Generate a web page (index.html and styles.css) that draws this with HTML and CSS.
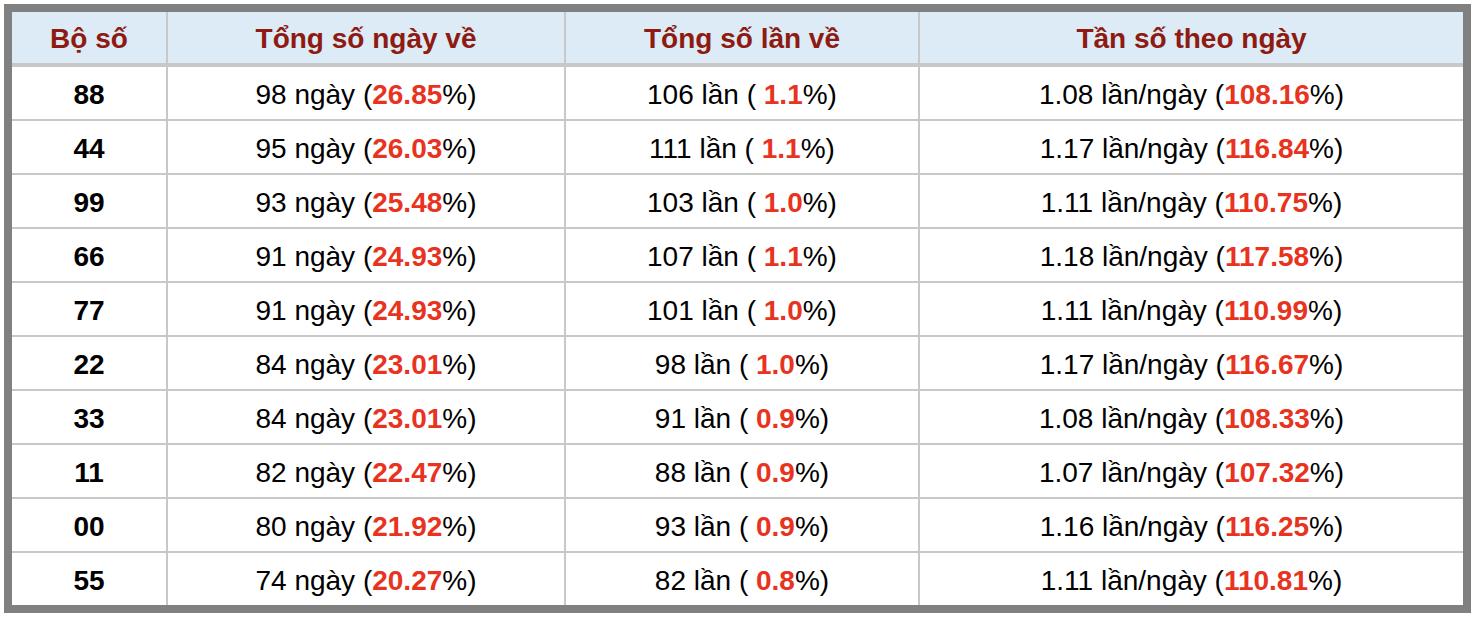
FILE: index.html
```html
<!DOCTYPE html>
<html lang="vi">
<head>
<meta charset="utf-8">
<title>Bộ số</title>
<link rel="stylesheet" href="styles.css">
</head>
<body>
<table class="stats">
  <thead>
    <tr>
      <th class="c1">Bộ số</th>
      <th class="c2">Tổng số ngày về</th>
      <th class="c3">Tổng số lần về</th>
      <th class="c4">Tần số theo ngày</th>
    </tr>
  </thead>
  <tbody>
    <tr><td class="num">88</td><td>98 ngày (<span class="r">26.85</span>%)</td><td>106 lần ( <span class="r">1.1</span>%)</td><td>1.08 lần/ngày (<span class="r">108.16</span>%)</td></tr>
    <tr><td class="num">44</td><td>95 ngày (<span class="r">26.03</span>%)</td><td>111 lần ( <span class="r">1.1</span>%)</td><td>1.17 lần/ngày (<span class="r">116.84</span>%)</td></tr>
    <tr><td class="num">99</td><td>93 ngày (<span class="r">25.48</span>%)</td><td>103 lần ( <span class="r">1.0</span>%)</td><td>1.11 lần/ngày (<span class="r">110.75</span>%)</td></tr>
    <tr><td class="num">66</td><td>91 ngày (<span class="r">24.93</span>%)</td><td>107 lần ( <span class="r">1.1</span>%)</td><td>1.18 lần/ngày (<span class="r">117.58</span>%)</td></tr>
    <tr><td class="num">77</td><td>91 ngày (<span class="r">24.93</span>%)</td><td>101 lần ( <span class="r">1.0</span>%)</td><td>1.11 lần/ngày (<span class="r">110.99</span>%)</td></tr>
    <tr><td class="num">22</td><td>84 ngày (<span class="r">23.01</span>%)</td><td>98 lần ( <span class="r">1.0</span>%)</td><td>1.17 lần/ngày (<span class="r">116.67</span>%)</td></tr>
    <tr><td class="num">33</td><td>84 ngày (<span class="r">23.01</span>%)</td><td>91 lần ( <span class="r">0.9</span>%)</td><td>1.08 lần/ngày (<span class="r">108.33</span>%)</td></tr>
    <tr><td class="num">11</td><td>82 ngày (<span class="r">22.47</span>%)</td><td>88 lần ( <span class="r">0.9</span>%)</td><td>1.07 lần/ngày (<span class="r">107.32</span>%)</td></tr>
    <tr><td class="num">00</td><td>80 ngày (<span class="r">21.92</span>%)</td><td>93 lần ( <span class="r">0.9</span>%)</td><td>1.16 lần/ngày (<span class="r">116.25</span>%)</td></tr>
    <tr><td class="num">55</td><td>74 ngày (<span class="r">20.27</span>%)</td><td>82 lần ( <span class="r">0.8</span>%)</td><td>1.11 lần/ngày (<span class="r">110.81</span>%)</td></tr>
  </tbody>
</table>
</body>
</html>
```
FILE: styles.css
```css
html, body {
  margin: 0;
  padding: 0;
  background: #ffffff;
}
body {
  padding: 4px;
  font-family: "Liberation Sans", Arial, Helvetica, sans-serif;
}
.stats {
  width: 1467px;
  table-layout: fixed;
  border-collapse: separate;
  border-spacing: 0;
  border: 8px solid #808080;
  font-size: 28px;
  line-height: 32px;
  color: #000;
}
.stats th,
.stats td {
  box-sizing: border-box;
  padding: 0;
  text-align: center;
  vertical-align: middle;
  border-right: 2px solid #c8c8c8;
  border-bottom: 2px solid #c8c8c8;
}
.stats th:last-child,
.stats td:last-child {
  border-right: none;
}
.stats tbody tr:last-child td {
  border-bottom: none;
}
.stats th {
  height: 55px;
  padding-top: 2px;
  background: #dcebf5;
  color: #8e1a12;
  font-weight: bold;
  font-size: 28px;
  border-bottom: 4px solid #c8c8c8;
}
.stats td {
  height: 54px;
  padding-top: 4px;
  font-weight: normal;
}
.stats tbody tr:last-child td {
  height: 52px;
}
.c1 { width: 156px; }
.c2 { width: 398px; }
.c3 { width: 354px; }
.c4 { width: 543px; }
.stats td.num {
  font-weight: bold;
}
.r {
  color: #e8331f;
  font-weight: bold;
}
```
